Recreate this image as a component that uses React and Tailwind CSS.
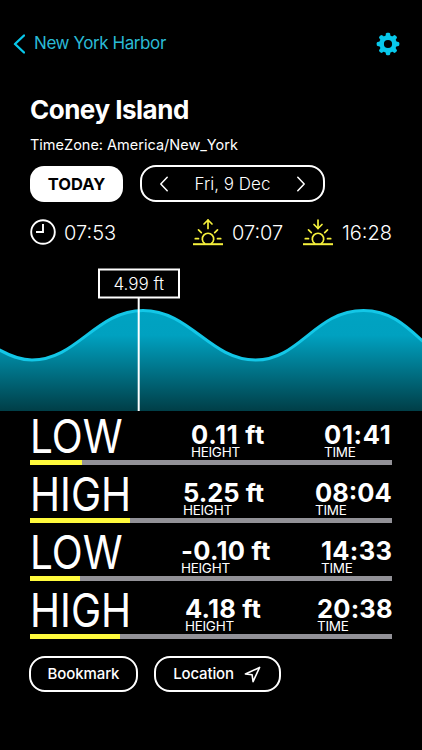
import React from 'react';

const tides = [
  { type: 'LOW', height: '0.11 ft', time: '01:41', level: 52, cols: 'grid-cols-[161px_133px_1fr]', tracking: 'tracking-[0.7px]' },
  { type: 'HIGH', height: '5.25 ft', time: '08:04', level: 100, cols: 'grid-cols-[153px_132px_1fr]', tracking: 'tracking-[0px]' },
  { type: 'LOW', height: '-0.10 ft', time: '14:33', level: 50, cols: 'grid-cols-[151px_140px_1fr]', tracking: 'tracking-[0.3px]' },
  { type: 'HIGH', height: '4.18 ft', time: '20:38', level: 90, cols: 'grid-cols-[155px_132px_1fr]', tracking: 'tracking-[0.2px]' },
];

const wave =
  'M-4 348 C10 356 20 360 32 360 C77 360 96 310.5 143 310.5 C190 310.5 210 360 255.500 360 C300 360 315 310.5 363.500 310.5 C392 310.5 408 328 426 344';

const Chevron = ({ className, points }) => (
  <svg className={className} viewBox="0 0 12 20" fill="none" stroke="currentColor" strokeLinecap="round" strokeLinejoin="round">
    <polyline points={points} />
  </svg>
);

const Gear = () => (
  <svg className="h-6 w-6 text-[#08c8eb]" viewBox="0 0 24 24" fill="currentColor">
    <circle cx="12" cy="12" r="6.400" fill="none" stroke="currentColor" strokeWidth="4.600" />
    {[0, 45, 90, 135, 180, 225, 270, 315].map((angle) => (
      <path key={angle} d="M9.300 5 L10 1.500 Q10.200 .7 11.200 .7 H12.800 Q13.800 .7 14 1.500 L14.700 5 Z" transform={`rotate(${angle} 12 12)`} />
    ))}
  </svg>
);

const Sun = ({ arrow }) => (
  <svg className="h-7 w-[30px] text-[#f5f03c]" viewBox="0 0 30 28" fill="none" stroke="currentColor" strokeWidth="1.700" strokeLinecap="round" strokeLinejoin="round">
    <path d="M0 26.200 H30" strokeLinecap="butt" strokeWidth="2" />
    <path d="M11.600 25.500 A5.700 5.700 0 1 1 18.400 25.500" />
    <path d="M2.300 20.700 H5.500 M24.500 20.700 H27.700 M5.500 11.800 L8.300 14.600 M24.500 11.800 L21.700 14.600" />
    <path d="M15 2 V10.500" />
    <path d={arrow} />
  </svg>
);

const TideRow = ({ tide }) => (
  <div className="flex h-[58px] flex-col">
    <div className={`grid h-[49px] ${tide.cols}`}>
      <div className="w-[115px] origin-left scale-x-[0.87] text-[46.5px] leading-[51px]">{tide.type}</div>
      <div>
        <p className={`mt-[11px] text-[25.5px] leading-[26px] font-bold ${tide.tracking}`}>{tide.height}</p>
        <p className="-mt-[2px] text-[13.5px] leading-[13px] tracking-[-0.3px]">HEIGHT</p>
      </div>
      <div>
        <p className={`mt-[11px] text-[25.5px] leading-[26px] font-bold ${tide.tracking}`}>{tide.time}</p>
        <p className="-mt-[2px] text-[13.5px] leading-[13px] tracking-[-0.3px]">TIME</p>
      </div>
    </div>
    <div className="h-[5px] bg-[#929197]">
      <div className="h-full bg-[#fffa3c]" style={{ width: tide.level }} />
    </div>
  </div>
);

const App = () => {
  return (
    <div className="h-[750px] w-[422px] overflow-hidden bg-black font-['Inter',sans-serif] whitespace-nowrap text-white">
      <header className="flex h-[87px] items-center justify-between pr-[22px] pl-[13px]">
        <div className="flex items-center text-[#2abad5]">
          <Chevron className="h-5 w-3 stroke-[2.4] text-[#08c8eb]" points="11,1.500 2,10 11,18.500" />
          <span className="ml-[9px] text-[17px] tracking-[-0.42px]">New York Harbor</span>
        </div>
        <Gear />
      </header>

      <div className="h-[181px] px-[30px]">
        <h1 className="pt-[5px] text-[26px] leading-[36px] font-bold tracking-[-0.5px]">Coney Island</h1>
        <p className="mt-[7px] text-[14.5px] leading-[20px]">TimeZone: America/New_York</p>
        <div className="mt-[10px] flex items-center">
          <button className="h-[36px] w-[93px] rounded-[14px] bg-white pt-px text-[16.5px] font-bold text-black">TODAY</button>
          <div className="ml-[17px] flex h-[37px] w-[185px] items-center justify-between rounded-[16px] border-2 border-white px-[17px]">
            <Chevron className="h-[16px] w-[10px] stroke-[1.9]" points="10,1.500 2,10 10,18.500" />
            <span className="pt-[2px] text-[17px] font-light">Fri, 9 Dec</span>
            <Chevron className="h-[16px] w-[10px] stroke-[1.9]" points="2,1.500 10,10 2,18.500" />
          </div>
        </div>
        <div className="mt-[16px] flex h-[28px] items-center text-[20px] font-light">
          <svg className="h-[26px] w-[26px]" viewBox="0 0 26 26" fill="none" stroke="currentColor" strokeWidth="1.900">
            <circle cx="13" cy="13" r="11.800" />
            <path d="M13 5 V13 H6" />
          </svg>
          <span className="ml-[8px] w-[129px] pt-px">07:53</span>
          <Sun arrow="M11 6 L15 2 L19 6" />
          <span className="ml-[9px] w-[71px] pt-px">07:07</span>
          <Sun arrow="M11 6.500 L15 10.500 L19 6.500" />
          <span className="ml-[9px] pt-px">16:28</span>
        </div>
      </div>

      <svg className="block h-[143px] w-[422px]" viewBox="0 268 422 143">
        <defs>
          <linearGradient id="water" x1="0" y1="310" x2="0" y2="411" gradientUnits="userSpaceOnUse">
            <stop offset="0" stopColor="#00a3c2" />
            <stop offset="0.250" stopColor="#00a1c0" />
            <stop offset="1" stopColor="#003e47" />
          </linearGradient>
        </defs>
        <path d={`${wave} V411 H-4 Z`} fill="url(#water)" />
        <path d={wave} fill="none" stroke="#13c7e7" strokeWidth="3" />
        <path d="M138.700 298 V411" stroke="#fff" strokeWidth="2" />
        <rect x="99" y="269.500" width="80" height="28" fill="#000" stroke="#fff" strokeWidth="2" />
        <text x="138.700" y="290" textAnchor="middle" fill="#fff" fontSize="17" fontWeight="300">4.99 ft</text>
      </svg>

      <div className="h-[232px] px-[30px]">
        {tides.map((tide) => (
          <TideRow key={tide.time} tide={tide} />
        ))}
      </div>

      <div className="flex gap-4 pt-[13px] pl-[29px]">
        <button className="h-[36px] w-[109px] rounded-[16px] border-2 border-white pt-px text-[15px] font-medium tracking-[-0.1px]">Bookmark</button>
        <button className="flex h-[36px] w-[127px] items-center justify-center gap-[10px] rounded-[16px] border-2 border-white pt-px pr-[7px] pl-[6px] text-[15px] font-medium tracking-[-0.15px]">
          Location
          <svg className="-mt-px h-[17px] w-[17px]" viewBox="0 0 18 18" fill="none" stroke="currentColor" strokeWidth="1.700" strokeLinejoin="round">
            <path d="M16.500 1.500 L1.500 8.500 L8.600 9.300 L9.600 16.500 Z" />
          </svg>
        </button>
      </div>
    </div>
  );
};

export default App;
